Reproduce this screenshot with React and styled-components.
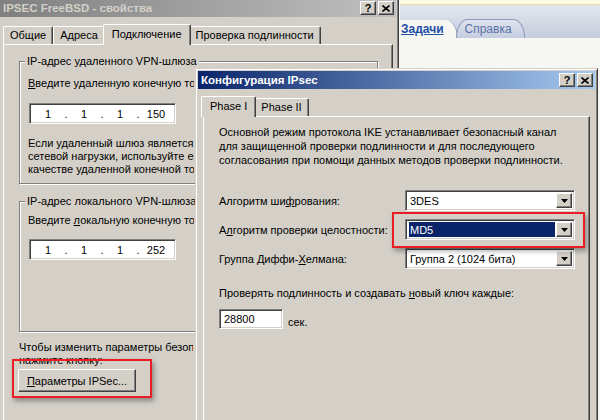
import React from "react";
import styled, { createGlobalStyle, css } from "styled-components";

const GlobalStyle = createGlobalStyle`
  html, body {
    margin: 0;
    padding: 0;
    background: #f6f6f2;
  }
  body {
    font-family: "Liberation Sans", Arial, sans-serif;
    font-size: 11px;
    color: #000;
  }
`;

const face = "#d4d0c8";

const raised = css`
  border: 1px solid;
  border-color: #fff #404040 #404040 #fff;
  box-shadow: inset -1px -1px #808080, inset 1px 1px ${face};
`;

const sunken = css`
  border: 1px solid;
  border-color: #808080 #fff #fff #808080;
  box-shadow: inset 1px 1px #404040, inset -1px -1px ${face};
`;

const Desktop = styled.div`
  position: relative;
  width: 600px;
  height: 420px;
  overflow: hidden;
  background: #f6f6f2;
`;

/* help pane of the console behind the dialogs */
const HelpPane = styled.div`
  position: absolute;
  left: 400px;
  top: 0;
  width: 200px;
  height: 420px;
  background: #f6f6f2;
  display: flex;
  flex-direction: column;
`;

const InfoStrip = styled.div`
  height: 4px;
  background: #fffbe2;
  border-bottom: 1px solid #e4dcaa;
`;

const HelpTabs = styled.div`
  height: 33px;
  display: flex;
  align-items: flex-end;
  background: linear-gradient(#e2e6ee, #c6cddb);
`;

const HelpTab = styled.div`
  height: 18px;
  display: flex;
  align-items: center;
  font-size: 12px;
  ${(p) =>
    p.$active
      ? css`
          background: #f6f6f2;
          color: #1f4ea3;
          text-decoration: underline;
          font-weight: bold;
          padding: 0 13px 0 1px;
          border-top-right-radius: 12px 18px;
          border-right: 1px solid #8b9ab8;
        `
      : css`
          background: linear-gradient(#dfe4ee, #c4cde0);
          color: #5a73a6;
          padding: 0 12px 0 8px;
          margin-left: -2px;
          border: 1px solid #8b9ab8;
          border-bottom: none;
          border-radius: 12px 12px 0 0 / 18px 18px 0 0;
        `}
`;

const Window = styled.div`
  position: absolute;
  left: ${(p) => p.$x}px;
  top: ${(p) => p.$y}px;
  width: ${(p) => p.$w}px;
  height: ${(p) => p.$h}px;
  box-sizing: border-box;
  background: ${face};
  border: 1px solid;
  border-color: ${face} #404040 #404040 ${face};
  box-shadow: inset 1px 1px #fff, inset -1px -1px #808080;
  padding: 2px;
  display: flex;
  flex-direction: column;
`;

const TitleBar = styled.div`
  height: 18px;
  flex-shrink: 0;
  display: flex;
  align-items: center;
  justify-content: space-between;
  padding-left: 3px;
  font-weight: bold;
  font-size: 11.5px;
  white-space: nowrap;
  ${(p) =>
    p.$active
      ? css`
          background: linear-gradient(to right, #0a246a, #a6caf0);
          color: #fff;
        `
      : css`
          background: linear-gradient(to right, #808080, #c0c0c0);
          color: ${face};
        `}
`;

const CaptionButtons = styled.div`
  display: flex;
  gap: 2px;
  margin-right: 2px;
`;

const CaptionButton = styled.div`
  width: 16px;
  height: 14px;
  box-sizing: border-box;
  ${raised};
  background: ${face};
  color: #000;
  font-weight: bold;
  font-size: 11px;
  display: flex;
  align-items: center;
  justify-content: center;
  line-height: 1;
`;

const TabStrip = styled.div`
  display: flex;
  align-items: flex-end;
  margin: ${(p) => p.$top}px 0 0 ${(p) => p.$left}px;
  height: 20px;
  position: relative;
  z-index: 1;
`;

const Tab = styled.div`
  box-sizing: border-box;
  background: ${face};
  border: 1px solid;
  border-bottom: none;
  border-color: #fff #404040 #404040 #fff;
  border-radius: 2px 2px 0 0;
  box-shadow: inset -1px 0 #808080;
  display: flex;
  align-items: flex-start;
  white-space: nowrap;
  ${(p) =>
    p.$active
      ? css`
          height: 21px;
          margin: 0 -2px -1px;
          padding: 3px 8px 0;
          position: relative;
          z-index: 2;
        `
      : css`
          height: 18px;
          padding: 2px 6px 0;
        `}
`;

const Panel = styled.div`
  flex: 1;
  margin: 0 ${(p) => p.$side}px;
  ${raised};
  box-shadow: inset -1px -1px #808080;
  padding: ${(p) => p.$pad};
  display: flex;
  flex-direction: column;
  white-space: nowrap;
`;

const GroupBox = styled.div`
  position: relative;
  box-sizing: border-box;
  border: 1px solid #808080;
  box-shadow: inset 1px 1px #fff, 1px 1px #fff;
  padding: ${(p) => p.$pad};
  margin-top: ${(p) => p.$top || 0}px;
  height: ${(p) => (p.$h ? `${p.$h}px` : "auto")};
`;

const Legend = styled.span`
  position: absolute;
  top: -7px;
  left: 5px;
  padding: 0 2px;
  background: ${face};
  line-height: 13px;
`;

/* a text line; $clip cuts it where the dialog in front begins */
const Line = styled.div`
  line-height: ${(p) => p.$lh || 14}px;
  margin-top: ${(p) => p.$top || 0}px;
  ${(p) =>
    p.$clip &&
    css`
      width: ${p.$clip}px;
      overflow: hidden;
    `}
`;

const IpField = styled.div`
  box-sizing: border-box;
  width: 147px;
  height: 21px;
  margin: ${(p) => p.$top}px 0 0 1px;
  ${sunken};
  background: #fff;
  display: flex;
  align-items: center;
  padding-left: 3px;
`;

const Octet = styled.span`
  width: 30px;
  text-align: center;
`;

const Dot = styled.span`
  width: 6px;
  text-align: center;
`;

const PushButton = styled.div`
  box-sizing: border-box;
  width: 118px;
  height: 23px;
  margin: 2px 0 0 -1px;
  ${raised};
  display: flex;
  align-items: center;
  justify-content: center;
`;

const Settings = styled.div`
  display: grid;
  grid-template-columns: 186px 170px;
  row-gap: 8px;
  align-items: center;
  margin-top: 23px;
`;

const Combo = styled.div`
  box-sizing: border-box;
  height: 21px;
  ${sunken};
  background: #fff;
  display: flex;
  align-items: stretch;
  padding: 2px;
`;

const ComboText = styled.div`
  flex: 1;
  display: flex;
  align-items: center;
  padding-left: 1px;
  margin: 0 1px;
  ${(p) =>
    p.$selected &&
    css`
      background: #0a246a;
      color: #fff;
    `}
`;

const DropButton = styled.div`
  box-sizing: border-box;
  width: 16px;
  ${raised};
  background: ${face};
  display: flex;
  align-items: center;
  justify-content: center;
`;

const LifetimeRow = styled.div`
  display: flex;
  align-items: flex-end;
  margin-top: 9px;
`;

const NumberField = styled.div`
  box-sizing: border-box;
  width: 64px;
  height: 20px;
  ${sunken};
  background: #fff;
  display: flex;
  align-items: center;
  padding-left: 4px;
`;

const Unit = styled.span`
  margin: 0 0 1px 5px;
`;

const Highlight = styled.div`
  position: absolute;
  left: ${(p) => p.$x}px;
  top: ${(p) => p.$y}px;
  width: ${(p) => p.$w}px;
  height: ${(p) => p.$h}px;
  box-sizing: border-box;
  border: 2px solid #ec1c24;
  box-shadow: 2px 3px 5px rgba(0, 0, 0, 0.35);
  z-index: 5;
`;

const CloseGlyph = () => (
  <svg width="8" height="7" viewBox="0 0 8 7">
    <path d="M0.5 0.5 L7.5 6.5 M7.5 0.5 L0.5 6.5" stroke="#000" strokeWidth="1.6" />
  </svg>
);

const ArrowGlyph = () => (
  <svg width="7" height="4" viewBox="0 0 7 4">
    <polygon points="0,0 7,0 3.5,4" fill="#000" />
  </svg>
);

const Caption = ({ title, active }) => (
  <TitleBar $active={active}>
    <span>{title}</span>
    <CaptionButtons>
      <CaptionButton>?</CaptionButton>
      <CaptionButton>
        <CloseGlyph />
      </CaptionButton>
    </CaptionButtons>
  </TitleBar>
);

const Ip = ({ parts, top }) => (
  <IpField $top={top}>
    {parts.map((p, i) => (
      <React.Fragment key={i}>
        {i > 0 && <Dot>.</Dot>}
        <Octet>{p}</Octet>
      </React.Fragment>
    ))}
  </IpField>
);

const Select = ({ value, selected }) => (
  <Combo>
    <ComboText $selected={selected}>{value}</ComboText>
    <DropButton>
      <ArrowGlyph />
    </DropButton>
  </Combo>
);

const App = () => {
  return (
    <>
      <GlobalStyle />
      <Desktop>
        <HelpPane>
          <InfoStrip />
          <HelpTabs>
            <HelpTab $active>Задачи</HelpTab>
            <HelpTab>Справка</HelpTab>
          </HelpTabs>
        </HelpPane>

        <Window $x={-3} $y={-4} $w={402} $h={440}>
          <Caption title="IPSEC FreeBSD - свойства" />
          <TabStrip $top={7} $left={3}>
            <Tab>Общие</Tab>
            <Tab>Адреса</Tab>
            <Tab $active>Подключение</Tab>
            <Tab>Проверка подлинности</Tab>
          </TabStrip>
          <Panel $side={3} $pad="16px 14px 0 15px">
            <GroupBox $pad="14px 8px 7px 8px">
              <Legend>IP-адрес удаленного VPN-шлюза</Legend>
              <Line $clip={166}>
                <u>В</u>ведите удаленную конечную точку туннеля:
              </Line>
              <Ip parts={["1", "1", "1", "150"]} top={13} />
              <Line $lh={13} $top={13} $clip={166}>
                Если удаленный шлюз является кластером, то в качестве
                <br />
                сетевой нагрузки, используйте его виртуальный IP-адрес в
                <br />
                качестве удаленной конечной точки туннеля.
              </Line>
            </GroupBox>
            <GroupBox $pad="11px 8px 0 8px" $top={17} $h={131}>
              <Legend>IP-адрес локального VPN-шлюза</Legend>
              <Line $clip={166}>
                Введите <u>л</u>окальную конечную точку туннеля:
              </Line>
              <Ip parts={["1", "1", "1", "252"]} top={12} />
            </GroupBox>
            <Line $lh={13} $top={9} $clip={174}>
              Чтобы изменить параметры безопасности IPSec,
              <br />
              нажмите кнопку:
            </Line>
            <PushButton>
              <span>
                <u>П</u>араметры IPSec...
              </span>
            </PushButton>
          </Panel>
        </Window>

        <Window $x={195} $y={68} $w={403} $h={370}>
          <Caption title="Конфигурация IPsec" active />
          <TabStrip $top={7} $left={5}>
            <Tab $active>Phase I</Tab>
            <Tab>Phase II</Tab>
          </TabStrip>
          <Panel $side={5} $pad="8px 0 0 15px">
            <Line>
              Основной режим протокола IKE устанавливает безопасный канал
              <br />
              для защищенной проверки подлинности и для последующего
              <br />
              согласования при помощи данных методов проверки подлинности.
            </Line>
            <Settings>
              <span>
                Алгоритм ши<u>ф</u>рования:
              </span>
              <Select value="3DES" />
              <span>
                А<u>л</u>горитм проверки целостности:
              </span>
              <Select value="MD5" selected />
              <span>
                Группа Диффи-<u>Х</u>елмана:
              </span>
              <Select value="Группа 2 (1024 бита)" />
            </Settings>
            <Line $top={17}>
              Проверять подлинность и создавать <u>н</u>овый ключ каждые:
            </Line>
            <LifetimeRow>
              <NumberField>28800</NumberField>
              <Unit>сек.</Unit>
            </LifetimeRow>
          </Panel>
        </Window>

        <Highlight $x={12} $y={359} $w={140} $h={39} />
        <Highlight $x={392} $y={212} $w={193} $h={36} />
      </Desktop>
    </>
  );
};

export default App;
